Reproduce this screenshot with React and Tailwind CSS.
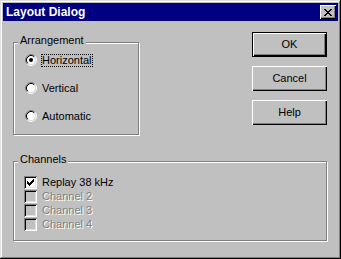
import React from "react";

const font = "font-['Liberation_Sans',Arial,sans-serif]";

const Radio = ({ checked }) => (
  <svg width="12" height="12" viewBox="0 0 12 12" className="shrink-0">
    <circle cx="6" cy="6" r="4.2" fill="#fff" />
    <path d="M2.11 9.89 A5.5 5.5 0 0 1 9.89 2.11" fill="none" stroke="#808080" strokeWidth="1" />
    <path d="M9.89 2.11 A5.5 5.5 0 0 1 2.11 9.89" fill="none" stroke="#fff" strokeWidth="1" />
    <path d="M2.82 9.18 A4.5 4.5 0 0 1 9.18 2.82" fill="none" stroke="#000" strokeWidth="1" />
    <path d="M9.18 2.82 A4.5 4.5 0 0 1 2.82 9.18" fill="none" stroke="#dfdfdf" strokeWidth="1" />
    {checked && <circle cx="6" cy="6" r="2" fill="#000" />}
  </svg>
);

const starts = [2, 3, 4, 3, 2, 1, 0];

const Checkbox = ({ checked, disabled }) => (
  <div
    className={`w-[13px] h-[13px] shrink-0 shadow-[inset_1px_1px_#808080,inset_-1px_-1px_#fff,inset_2px_2px_#000,inset_-2px_-2px_#dfdfdf] ${
      disabled ? "bg-[#c0c0c0]" : "bg-white"
    }`}
  >
    {checked && (
      <svg width="13" height="13" viewBox="0 0 13 13">
        <path d={starts.map((s, i) => `M${3 + i} ${3 + s}h1v3h-1z`).join("")} fill="#000" />
      </svg>
    )}
  </div>
);

const GroupBox = ({ label, className = "", children }) => (
  <div className={`relative border border-[#808080] shadow-[1px_1px_0_#fff,inset_1px_1px_0_#fff] ${className}`}>
    <span className="absolute left-[4px] -top-[9px] px-[2px] bg-[#c0c0c0] leading-[13px]">{label}</span>
    {children}
  </div>
);

const Button = ({ children, isDefault }) => (
  <button
    className={`h-[25px] w-full flex items-center justify-center bg-[#c0c0c0] text-black ${
      isDefault
        ? "shadow-[inset_0_0_0_1px_#000,inset_1px_1px_0_1px_#fff,inset_-2px_-2px_0_0_#000,inset_-3px_-3px_0_0_#808080]"
        : "shadow-[inset_1px_1px_#fff,inset_-1px_-1px_#000,inset_-2px_-2px_#808080]"
    }`}
  >
    {children}
  </button>
);

export default function App() {
  const arrangement = ["Horizontal", "Vertical", "Automatic"];
  const channels = [
    { name: "Replay 38 kHz", checked: true, disabled: false },
    { name: "Channel 2", checked: false, disabled: true },
    { name: "Channel 3", checked: false, disabled: true },
    { name: "Channel 4", checked: false, disabled: true },
  ];

  return (
    <div
      className={`w-[341px] h-[259px] p-[3px] flex flex-col bg-[#c0c0c0] text-[11px] text-black ${font} shadow-[inset_-1px_-1px_#000,inset_1px_1px_#dfdfdf,inset_-2px_-2px_#808080,inset_2px_2px_#fff]`}
    >
      {/* Title bar */}
      <div className="h-[18px] bg-[#000080] flex items-center pl-[3px] pr-[2px]">
        <span className="text-white font-bold text-[12px] leading-none">Layout Dialog</span>
        <button className="ml-auto w-[16px] h-[14px] bg-[#c0c0c0] flex items-center justify-center shadow-[inset_1px_1px_#fff,inset_-1px_-1px_#000,inset_-2px_-2px_#808080]">
          <svg width="8" height="7" viewBox="0 0 8 7">
            <path d="M0 0h2v1h-2zM6 0h2v1h-2zM1 1h2v1h-2zM5 1h2v1h-2zM2 2h4v1h-4zM3 3h2v1h-2zM2 4h4v1h-4zM1 5h2v1h-2zM5 5h2v1h-2zM0 6h2v1h-2zM6 6h2v1h-2z" fill="#000" />
          </svg>
        </button>
      </div>

      {/* Body */}
      <div className="flex-1 pl-[10px] pr-[11px] pt-[11px]">
        <div className="flex items-start justify-between">
          <GroupBox label="Arrangement" className="mt-[10px] w-[126px] h-[93px]">
            <div className="flex flex-col pt-[3px] pl-[11px]">
              {arrangement.map((item, i) => (
                <div key={item} className="h-[28px] flex items-center">
                  <Radio checked={i === 0} />
                  <span
                    className={`ml-[4px] leading-[11px] border ${
                      i === 0 ? "border-dotted border-black" : "border-transparent"
                    }`}
                  >
                    {item}
                  </span>
                </div>
              ))}
            </div>
          </GroupBox>

          <div className="w-[75px] flex flex-col gap-[9px]">
            <Button isDefault>OK</Button>
            <Button>Cancel</Button>
            <Button>Help</Button>
          </div>
        </div>

        <GroupBox label="Channels" className="mt-[26px] h-[80px]">
          <div className="flex flex-col pt-[13px] pl-[10px]">
            {channels.map((ch) => (
              <div key={ch.name} className="h-[14px] flex items-center">
                <Checkbox checked={ch.checked} disabled={ch.disabled} />
                <span
                  className={`ml-[5px] leading-[13px] ${
                    ch.disabled ? "text-[#808080] [text-shadow:1px_1px_0_#fff]" : ""
                  }`}
                >
                  {ch.name}
                </span>
              </div>
            ))}
          </div>
        </GroupBox>
      </div>
    </div>
  );
}
